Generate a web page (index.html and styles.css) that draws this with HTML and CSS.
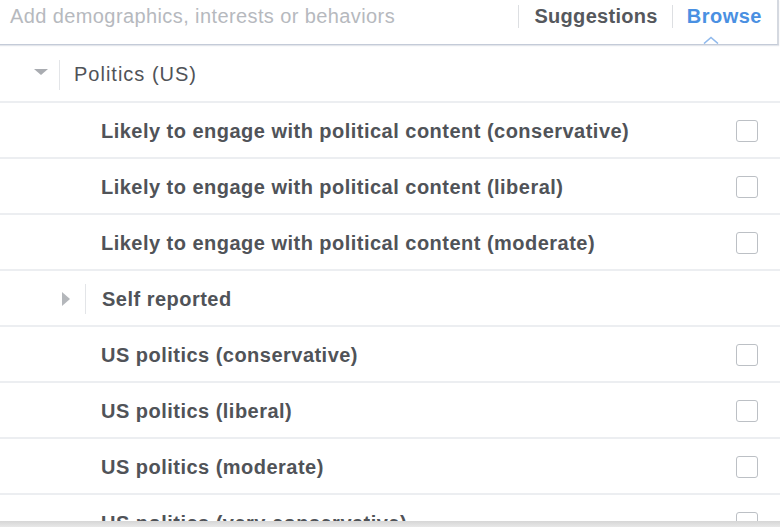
FILE: index.html
```html
<!DOCTYPE html>
<html>
<head>
<meta charset="utf-8">
<link rel="stylesheet" href="styles.css">
</head>
<body>
<div class="panel">
  <div class="search">
    <div class="placeholder">Add demographics, interests or behaviors</div>
    <div class="tabs">
      <span class="sep"></span>
      <span class="tab">Suggestions</span>
      <span class="sep"></span>
      <span class="tab active">Browse<svg class="caret" width="16" height="8" viewBox="0 0 16 8"><path d="M1 7.5 L8 1.5 L15 7.5" fill="none" stroke="#8fb9ec" stroke-width="1.6"/></svg></span>
    </div>
  </div>
  <div class="list">
    <div class="row cat lvl1">
      <span class="tri down"></span><span class="vsep"></span><span class="label normal">Politics (US)</span>
    </div>
    <div class="row lvl2"><span class="label">Likely to engage with political content (conservative)</span><span class="box"></span></div>
    <div class="row lvl2"><span class="label">Likely to engage with political content (liberal)</span><span class="box"></span></div>
    <div class="row lvl2"><span class="label">Likely to engage with political content (moderate)</span><span class="box"></span></div>
    <div class="row cat lvl2c">
      <span class="tri right"></span><span class="vsep"></span><span class="label">Self reported</span>
    </div>
    <div class="row lvl2"><span class="label">US politics (conservative)</span><span class="box"></span></div>
    <div class="row lvl2"><span class="label">US politics (liberal)</span><span class="box"></span></div>
    <div class="row lvl2"><span class="label">US politics (moderate)</span><span class="box"></span></div>
    <div class="row lvl2"><span class="label">US politics (very conservative)</span><span class="box"></span></div>
  </div>
  <div class="shade"></div>
</div>
</body>
</html>
```

FILE: styles.css
```css
html, body {
  margin: 0;
  padding: 0;
  background: #fff;
}
body {
  font-family: "Liberation Sans", Arial, sans-serif;
  width: 780px;
  height: 527px;
  overflow: hidden;
}
.panel {
  position: relative;
  width: 780px;
  height: 527px;
  overflow: hidden;
}
.search {
  height: 45px;
  box-sizing: border-box;
  border-bottom: 1px solid #c4cbd8;
  border-right: 2px solid #d5d9e0;
  width: 779px;
  display: flex;
  align-items: flex-start;
  justify-content: space-between;
  box-shadow: 0 1px 1px rgba(200,205,215,0.5);
}
.placeholder {
  padding: 4px 0 0 10px;
  font-size: 20px;
  line-height: 24px;
  letter-spacing: 0.4px;
  color: #b6b9be;
}
.tabs {
  display: flex;
  align-items: flex-start;
  padding-top: 4px;
  padding-right: 15px;
}
.sep {
  width: 1px;
  height: 23px;
  background: #dddfe2;
  margin-top: 1px;
}
.tab {
  position: relative;
  font-size: 20px;
  line-height: 24px;
  font-weight: bold;
  color: #55585d;
  padding: 0 14px 0 15px;
  letter-spacing: 0.3px;
}
.tab.active {
  color: #4a90e2;
  padding: 0 0 0 14px;
  letter-spacing: 0.5px;
}
.caret {
  position: absolute;
  left: 30px;
  top: 32px;
}
.row {
  height: 56px;
  box-sizing: border-box;
  border-bottom: 2px solid #eceef1;
  display: flex;
  align-items: center;
  font-size: 20px;
  color: #4b4f56;
  padding-top: 2px;
}
.row.lvl1 {
  height: 58px;
  padding-left: 34px;
  padding-top: 3px;
}
.row.lvl2 {
  padding-left: 101px;
  padding-right: 22px;
}
.row.lvl2c {
  padding-left: 62px;
}
.label {
  font-weight: bold;
  flex: 1;
  color: #505358;
  letter-spacing: 0.48px;
}
.label.normal {
  font-weight: normal;
  letter-spacing: 1px;
}
.tri {
  width: 0;
  height: 0;
}
.tri.down {
  border-left: 7px solid transparent;
  border-right: 7px solid transparent;
  border-top: 6px solid #a9acb1;
  margin-right: 11px;
  margin-top: -6px;
}
.tri.right {
  border-top: 7px solid transparent;
  border-bottom: 7px solid transparent;
  border-left: 8px solid #b4b7bb;
  margin-right: 15px;
}
.vsep {
  width: 1px;
  height: 30px;
  background: #e3e5e8;
  margin-right: 14px;
}
.lvl2c .vsep {
  margin-right: 16px;
}
.box {
  width: 22px;
  height: 22px;
  box-sizing: border-box;
  border: 1.5px solid #bcc0c5;
  border-radius: 3px;
}
.shade {
  position: absolute;
  left: 0;
  right: 0;
  bottom: 0;
  height: 6px;
  background: linear-gradient(#d6d6d6, #e8e8e8);
}
```
